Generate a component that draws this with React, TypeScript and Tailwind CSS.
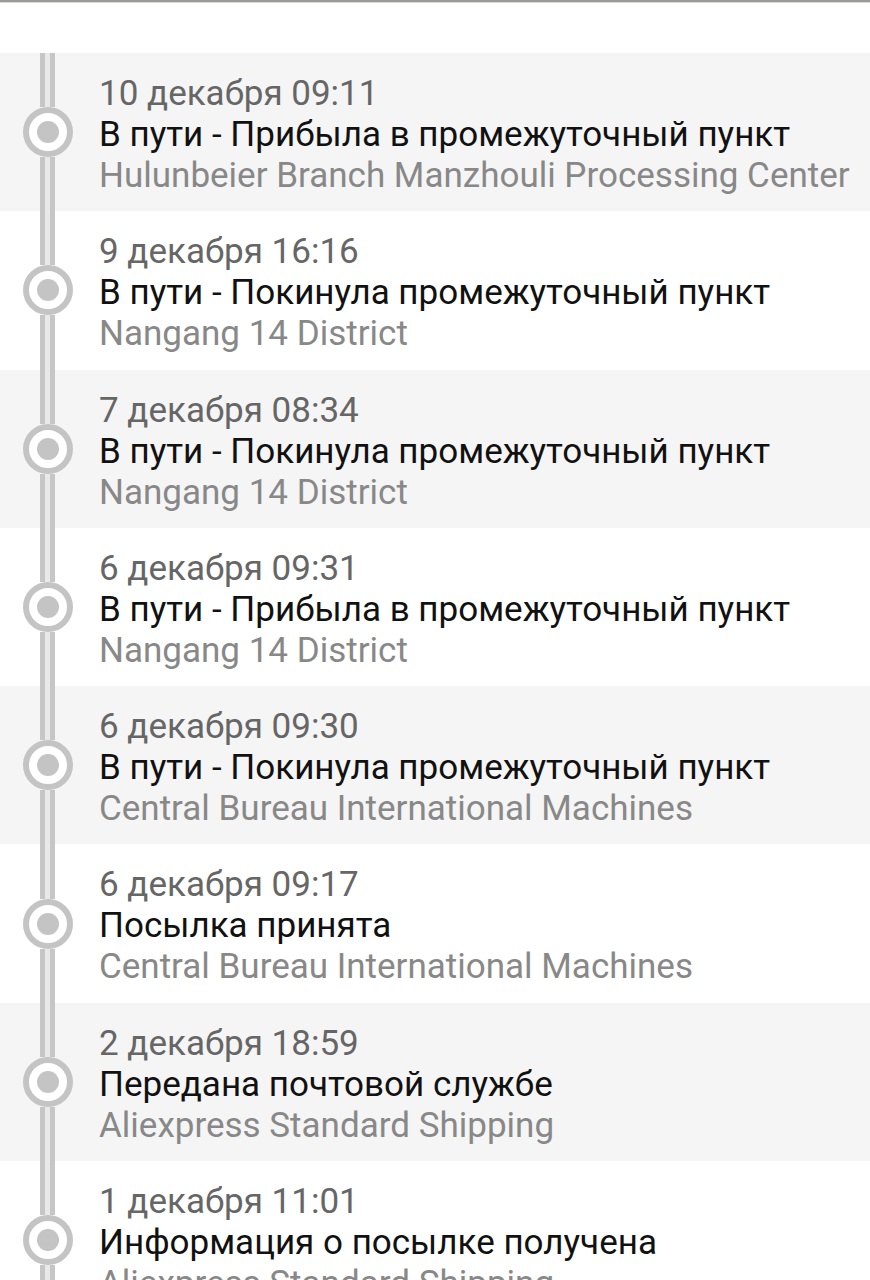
import React from "react";

const events = [
  { date: "10 декабря 09:11", title: "В пути - Прибыла в промежуточный пункт", place: "Hulunbeier Branch Manzhouli Processing Center" },
  { date: "9 декабря 16:16", title: "В пути - Покинула промежуточный пункт", place: "Nangang 14 District" },
  { date: "7 декабря 08:34", title: "В пути - Покинула промежуточный пункт", place: "Nangang 14 District" },
  { date: "6 декабря 09:31", title: "В пути - Прибыла в промежуточный пункт", place: "Nangang 14 District" },
  { date: "6 декабря 09:30", title: "В пути - Покинула промежуточный пункт", place: "Central Bureau International Machines" },
  { date: "6 декабря 09:17", title: "Посылка принята", place: "Central Bureau International Machines" },
  { date: "2 декабря 18:59", title: "Передана почтовой службе", place: "Aliexpress Standard Shipping" },
  { date: "1 декабря 11:01", title: "Информация о посылке получена", place: "Aliexpress Standard Shipping" },
];

const Line = () => (
  <div className="flex-1 w-[15px] border-x-[5px] border-[#c6c6c6] bg-[#e9e9e9]" />
);

const EventRow = ({ ev, odd }: any) => (
  <div className={`flex h-[158.3px] shrink-0 ${odd ? "bg-white" : "bg-[#f5f5f5]"}`}>
    <div className="flex w-[95px] shrink-0 flex-col items-center">
      <Line />
      <div className="flex h-[50px] w-[50px] shrink-0 items-center justify-center rounded-full border-[6px] border-[#c4c4c4] bg-white">
        <div className="h-[22px] w-[22px] rounded-full bg-[#c4c4c4]" />
      </div>
      <Line />
    </div>
    <div className="flex flex-col pl-[4px] pt-[20px] text-[35px] leading-[41px] whitespace-nowrap">
      <span className="text-[#666]">{ev.date}</span>
      <span className="text-[#111]">{ev.title}</span>
      <span className="text-[#888]">{ev.place}</span>
    </div>
  </div>
);

export default function App() {
  return (
    <div className="flex h-[1280px] w-[870px] flex-col overflow-hidden bg-white font-['Roboto',sans-serif]">
      <div className="h-[2px] shrink-0 bg-[#9a9a96]" />
      <div className="h-[1px] shrink-0 bg-[#d8d8d4]" />
      <div className="h-[50px] shrink-0" />
      {events.map((ev, i) => (
        <EventRow key={i} ev={ev} odd={i % 2 === 1} />
      ))}
    </div>
  );
}
